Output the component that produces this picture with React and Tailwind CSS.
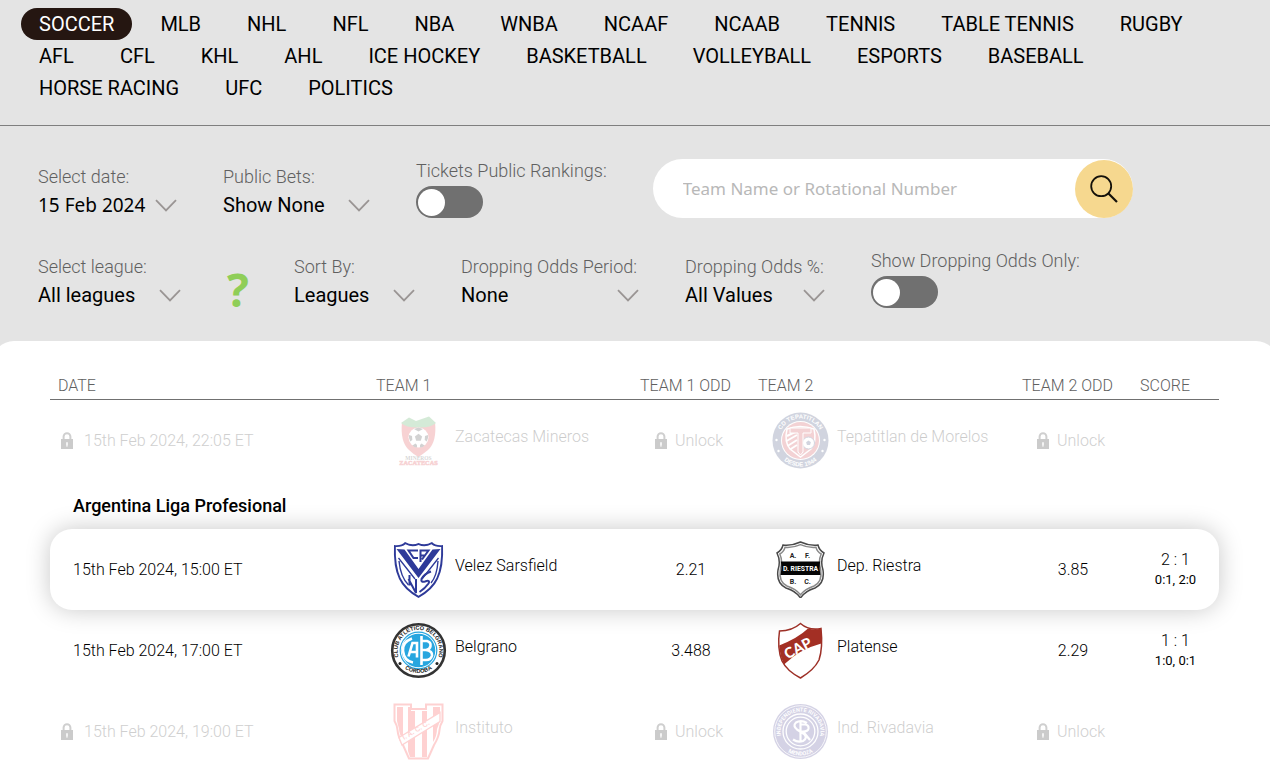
import React, { useState } from "react";

const SPORTS = [
  "SOCCER", "MLB", "NHL", "NFL", "NBA", "WNBA", "NCAAF", "NCAAB", "TENNIS", "TABLE TENNIS", "RUGBY",
  "AFL", "CFL", "KHL", "AHL", "ICE HOCKEY", "BASKETBALL", "VOLLEYBALL", "ESPORTS", "BASEBALL",
  "HORSE RACING", "UFC", "POLITICS",
];

function SportsNav() {
  const [active, setActive] = useState("SOCCER");
  return (
    <nav className="flex flex-wrap gap-x-[10px] border-b border-[#7f7f7f] pt-2 pr-4 pb-[21px] pl-[21px]">
      {SPORTS.map((s) => (
        <a
          key={s}
          href={"#" + s.toLowerCase().replace(" ", "-")}
          onClick={() => setActive(s)}
          className={
            "flex h-8 items-center rounded-full px-[18px] text-[20px] " +
            (s === active ? "bg-[#251611] text-white" : "text-black")
          }
        >
          {s}
        </a>
      ))}
    </nav>
  );
}

function SelectField({ id, label, width, options, valueFont = "text-[20px]" }) {
  return (
    <div className={"grid shrink-0 content-start pt-1.5 " + width}>
      <label htmlFor={id} className="text-[18px] leading-6 font-light whitespace-nowrap text-[#606060]">
        {label}
      </label>
      <div className="grid items-center">
        <select
          id={id}
          className={
            "col-start-1 row-start-1 h-8 w-full appearance-none bg-transparent p-0 text-black outline-none " +
            valueFont
          }
        >
          {options.map((o) => (
            <option key={o}>{o}</option>
          ))}
        </select>
        <svg
          viewBox="0 0 22 13"
          className="pointer-events-none col-start-1 row-start-1 h-[13px] w-[22px] justify-self-end"
          fill="none"
          stroke="#9a9594"
          strokeWidth="1.8"
          aria-hidden="true"
        >
          <path d="M1 1.2 L11 11.4 L21 1.2" />
        </svg>
      </div>
    </div>
  );
}

function ToggleField({ id, label }) {
  return (
    <div className="flex shrink-0 flex-col items-start gap-[3px]">
      <label htmlFor={id} className="text-[18px] leading-6 font-light whitespace-nowrap text-[#606060]">
        {label}
      </label>
      <input
        id={id}
        type="checkbox"
        className="flex h-8 w-[67px] appearance-none items-center rounded-full bg-[#707070] px-0.5 before:block before:size-[27px] before:rounded-full before:bg-white checked:justify-end"
      />
    </div>
  );
}

function SearchBox() {
  return (
    <form className="flex h-[59px] w-[480px] min-w-0 items-center rounded-full bg-white" onSubmit={(e) => e.preventDefault()}>
      <input
        type="search"
        aria-label="Team Name or Rotational Number"
        placeholder="Team Name or Rotational Number"
        className="min-w-0 flex-1 bg-transparent pl-[30px] font-['Noto_Sans',sans-serif] text-[17px] outline-none placeholder:text-[#b8b8b8]"
      />
      <button
        type="submit"
        aria-label="Search"
        className="flex size-[58px] shrink-0 items-center justify-center rounded-full bg-[#f6d88f]"
      >
        <svg viewBox="0 0 28 28" className="size-7" fill="none" stroke="#14110a" aria-hidden="true">
          <circle cx="11.2" cy="11.2" r="10" strokeWidth="1.8" />
          <path d="M18 18 L27 27" strokeWidth="2.2" />
        </svg>
      </button>
    </form>
  );
}

function Filters() {
  return (
    <div className="flex flex-col gap-7 pt-[33px] pr-4 pb-[30px] pl-[38px]">
      <div className="flex gap-x-[46px]">
        <SelectField
          id="date"
          label="Select date:"
          width="w-[139px]"
          options={["15 Feb 2024", "16 Feb 2024"]}
          valueFont="font-['Noto_Sans',sans-serif] text-[19px]"
        />
        <SelectField id="bets" label="Public Bets:" width="w-[147px]" options={["Show None", "Show All"]} />
        <ToggleField id="tickets" label="Tickets Public Rankings:" />
        <SearchBox />
      </div>
      <div className="flex gap-x-[46px]">
        <SelectField id="league" label="Select league:" width="w-[143px]" options={["All leagues", "Argentina Liga Profesional"]} />
        <button
          type="button"
          aria-label="Help"
          className="w-[21px] self-end pb-1 font-['Open_Sans',sans-serif] text-[46px] leading-9 font-bold text-[#8fce58]"
        >
          ?
        </button>
        <SelectField id="sort" label="Sort By:" width="w-[121px]" options={["Leagues", "Date"]} />
        <SelectField id="period" label="Dropping Odds Period:" width="w-[178px]" options={["None", "1 hour"]} />
        <SelectField id="percent" label="Dropping Odds %:" width="w-[140px]" options={["All Values", "10%"]} />
        <ToggleField id="dropping" label="Show Dropping Odds Only:" />
      </div>
    </div>
  );
}

function Lock() {
  return (
    <svg viewBox="0 0 12 17" className="h-[17px] w-3 shrink-0" aria-hidden="true">
      <path d="M2.6 8 V4.6 a3.4 3.4 0 0 1 6.8 0 V8" fill="none" stroke="#cfcfcf" strokeWidth="2" />
      <rect x="0" y="7" width="12" height="10" fill="#cbcbcb" />
      <path d="M5 10.2 h2 v2 l-0.4 2.6 h-1.2 l-0.4 -2.6z" fill="#f3f3f3" />
    </svg>
  );
}

function Mineros() {
  return (
    <>
      <path d="M12 10 Q28 17 45 10 Q47 30 38 38 Q33 42 28.500 45 Q23 42 19 38 Q10 30 12 10z" fill="#d8232a" />
      <path d="M11 11 L19 5.500 L26 9 L39 4.500 L46 11 Q40 16 28.500 15.500 Q17 16 11 11z" fill="#2f9a3b" />
      <circle cx="28.500" cy="25.500" r="10" fill="#fff" />
      <g fill="#222">
        <path d="M28.500 21.800l3.600 2.700-1.300 4.200h-4.600l-1.300-4.200z" />
        <path d="M24 17l4.500-1.500L33 17l-4.500 2.500z" />
        <path d="M19 23l3 1 .3 4-2 1.600q-2-3-1.300-6.600z" />
        <path d="M38 23l-3 1-.3 4 2 1.600q2-3 1.300-6.600z" />
        <path d="M22.500 33.500l3-2 1.500 1.500v2.400q-3 0-4.500-1.900z" />
        <path d="M34.500 33.500l-3-2-1.500 1.500v2.400q3 0 4.500-1.900z" />
      </g>
      <text x="28.500" y="47.500" textAnchor="middle" fontFamily="Liberation Serif" fontWeight="700" fontSize="5.500" fill="#333">MINEROS</text>
      <text x="28.500" y="53" textAnchor="middle" fontFamily="Liberation Serif" fontWeight="700" fontSize="6.300" fill="#d8232a" stroke="#d8232a" strokeWidth=".6">ZACATECAS</text>
    </>
  );
}

function Tepatitlan() {
  return (
    <>
      <circle cx="28.500" cy="28.500" r="28" fill="#1d2f63" />
      <circle cx="28.500" cy="28.500" r="19.500" fill="#fff" />
      <circle cx="28.500" cy="28.500" r="18.500" fill="#c5252f" />
      <path d="M15 17 Q28 12 42 17 Q45 30 39 37 L28.500 45 L18 37 Q12 30 15 17z" fill="#c5252f" stroke="#fff" strokeWidth="1.500" />
      <path d="M15 24 L25 19 M14.500 29 L25 23 M15.500 34 L25 28 M18 37.500 L25 33" stroke="#fff" strokeWidth="2" />
      <circle cx="36.500" cy="31" r="6" fill="#fff" stroke="#1d2f63" />
      <path d="M36.500 28.500l2.400 1.800-.9 2.800h-3l-.9-2.800z" fill="#1d2f63" />
      <path d="M18 16 H39 V21 H31 V40 L28.500 43 L26 40 V21 H18z" fill="#c5252f" stroke="#fff" strokeWidth="1" />
      <path id="tep-top" d="M6.500 28.500 A22 22 0 0 1 50.500 28.500" fill="none" />
      <path id="tep-bottom" d="M2.500 28.500 A26 26 0 0 0 54.500 28.500" fill="none" />
      <g fontFamily="Liberation Sans" fontWeight="700" fontSize="6" fill="#fff" textAnchor="middle">
        <text><textPath href="#tep-top" startOffset="50%">CD TEPATITLAN</textPath></text>
        <text><textPath href="#tep-bottom" startOffset="50%">DESDE 1944</textPath></text>
      </g>
      <g fill="#fff">
        <circle cx="4.500" cy="28" r="1.200" /><circle cx="52.500" cy="28" r="1.200" />
        <circle cx="6.500" cy="39" r="1.200" /><circle cx="50.500" cy="39" r="1.200" />
      </g>
    </>
  );
}

function Velez() {
  return (
    <>
      <path d="M4 4 Q11 5 15 1 Q22 5 28.500 2 Q35 5 42 1 Q46 5 53 4 Q54 26 48 38 Q43 49 28.500 57 Q14 49 9 38 Q3 26 4 4z" fill="#2e3a99" />
      <path d="M5.800 6 Q12 6.300 15.500 3.300 Q22 7 28.500 4.100 Q35 7 41.500 3.300 Q45 6.300 51.200 6 Q51.700 25 46.400 37 Q41 47.700 28.500 54.700 Q16 47.700 10.600 37 Q5.300 25 5.800 6z" fill="#fff" />
      <path d="M6.500 8 L14.500 8.500 L28.500 28 L42.500 8.500 L50.500 8 L28.500 37z" fill="#2e3a99" />
      <g fill="none" stroke="#2e3a99" strokeWidth="2">
        <path d="M28 9.500 H18.500 L23.500 17 H28" />
        <path d="M30.500 21 V9.500 H38.500 L32 18.500 M30.500 14.500 H35" />
        <path d="M19.500 34 V44.500 M18.500 38 L26 52 V38" />
        <path d="M41 30.500 Q34 33 31.500 38 Q30.500 41.500 35 40.500 Q40.500 38.500 38.500 42.500 Q35 47.500 29.500 51" />
      </g>
      <path d="M8.500 17 L25 38 M48.500 17 L32 38" fill="none" stroke="#2e3a99" strokeWidth="1.300" />
      <path d="M9 20 Q10.500 36 18.500 44 M48 20 Q47 35 41 42" fill="none" stroke="#2e3a99" strokeWidth="1.400" />
    </>
  );
}

function Belgrano() {
  return (
    <>
      <circle cx="28.500" cy="28.500" r="26.300" fill="#fff" stroke="#333" strokeWidth="2.600" />
      <circle cx="28.500" cy="28.500" r="18.300" fill="#fff" stroke="#28a6df" strokeWidth="1.200" />
      <circle cx="28.500" cy="28.500" r="16.800" fill="#28a6df" />
      <g fill="none" stroke="#fff" strokeWidth="2.600">
        <path d="M22 16.500 Q12 20 13 29 Q14 39 23 40.500" />
        <path d="M18.500 34.500 L22.500 21 H27 V35.500 M20 30 H27" />
        <path d="M31.500 14 V43 M31.500 19 H37 Q41 20 40.500 24 Q40 27.500 36 28 H31.500 M36 28 Q42.500 29 42 33.500 Q41 38 36 38 H31.500" />
      </g>
      <path id="bel-top" d="M9.500 37 A20.800 20.800 0 1 1 47.500 37" fill="none" />
      <path id="bel-bottom" d="M5 34 A24.800 24.800 0 0 0 52 34" fill="none" />
      <g fontFamily="Liberation Sans" fontWeight="700" fontSize="5.600" fill="#222" textAnchor="middle">
        <text><textPath href="#bel-top" startOffset="50%">CLUB ATLETICO BELGRANO</textPath></text>
        <text><textPath href="#bel-bottom" startOffset="50%">CORDOBA</textPath></text>
      </g>
      <circle cx="10" cy="41.500" r="1.500" fill="#222" />
      <circle cx="47" cy="41.500" r="1.500" fill="#222" />
    </>
  );
}

function Instituto() {
  return (
    <>
      <path d="M4.500 1.500 H21 V6 H36 V1.500 H52.500 V18 Q50 22 49.500 27 Q49 34 44 42 L38 55.500 H19 L13 42 Q8 34 7.500 27 Q7 22 4.500 18z" fill="#fff" stroke="#fb1f1f" strokeWidth="2" />
      <path d="M7 4 H13 V38 Q9 30 9 26 L7 18z M18 4 H21 V8 H25 V54 H20 L18 48z M32 8 H37 V54 H32z M43 4 H50 V18 L47 26 Q47 33 43 39z" fill="#fb1f1f" />
      <path d="M9 34.500 L50 9.500 V18.500 L12 42z" fill="#fff" stroke="#fb1f1f" strokeWidth="1.300" />
      <text transform="translate(14 37) rotate(-31)" fontFamily="Liberation Sans" fontWeight="700" fontSize="7" fill="#fb1f1f">I. A. C. C.</text>
    </>
  );
}

function Riestra() {
  return (
    <>
      <path d="M11 4 Q20 5 28.500 1 Q37 5 46 4 Q47 9 52 12 Q48 20 51 29 Q53 42 43 47 Q33 50 28.500 57 Q24 50 14 47 Q4 42 6 29 Q9 20 5 12 Q10 9 11 4z" fill="#fff" stroke="#4a4a4a" strokeWidth="1.500" />
      <path d="M13 6.300 Q21 7 28.500 3.600 Q36 7 44 6.300 Q45 10.500 49.200 13 Q46 20 48.700 29 Q50.500 41 42 45 Q33 48 28.500 53.800 Q24 48 15 45 Q6.500 41 8.300 29 Q11 20 7.800 13 Q12 10.500 13 6.300z" fill="#fff" stroke="#8a8a8a" strokeWidth="1.500" />
      <path d="M8.800 20.500 H48.200 Q47 26 48.500 34 H8.500 Q10 26 8.800 20.500z" fill="#050505" />
      <g fontFamily="Roboto" fontWeight="700" textAnchor="middle">
        <text x="28.500" y="30" fontSize="6.800" fill="#fff">D. RIESTRA</text>
        <g fontSize="7" fill="#222">
          <text x="21" y="16.500">A.</text><text x="35.500" y="16.500">F.</text>
          <text x="21" y="43">B.</text><text x="35.500" y="43">C.</text>
        </g>
      </g>
    </>
  );
}

function Platense() {
  return (
    <>
      <path d="M7.500 9 Q20 9 28.500 1.500 Q37 9 49 6.500 Q51 26 47 38 Q42 48 28.500 56 Q15 49 10 39 Q5 26 7.500 9z" fill="#fff" stroke="#9d3027" strokeWidth="1.500" />
      <path d="M7.200 23.500 Q26 16 36 6.500 Q43 8.500 49 6.500 Q50 14 49.300 21.500 Q28 27 12 42.500 Q8 34 7.200 23.500z" fill="#a32f24" />
      <text transform="translate(15.500 37.500) rotate(-28)" fontFamily="Lato" fontWeight="900" fontSize="14.500" fill="#fff">CAP</text>
    </>
  );
}

function Rivadavia() {
  return (
    <>
      <circle cx="28.500" cy="28.500" r="27.500" fill="#2d2480" />
      <circle cx="28.500" cy="28.500" r="25.800" fill="none" stroke="#fff" strokeWidth=".8" />
      <circle cx="28.500" cy="28.500" r="17.500" fill="none" stroke="#fff" strokeWidth="1.300" />
      <circle cx="28.500" cy="28.500" r="14.300" fill="none" stroke="#fff" strokeWidth="1.300" />
      <path d="M35 20 Q29 16.500 24 19.500 Q20.500 23 25 26.500 L32 31 Q36 35 31 38 Q26 40 21 36.500 M28.500 19 V38 M28.500 21.500 H33 Q37 22 36.500 25.500 Q36 28.500 31 28.500 L38 37" fill="none" stroke="#fff" strokeWidth="2.200" />
      <path id="riv-top" d="M9 33 A20 20 0 1 1 48 33" fill="none" />
      <path id="riv-bottom" d="M4.500 32 A24.300 24.300 0 0 0 52.500 32" fill="none" />
      <g fontFamily="Roboto" fontWeight="700" fontSize="5.500" fill="#fff" textAnchor="middle">
        <text><textPath href="#riv-top" startOffset="50%">INDEPENDIENTE RIVADAVIA</textPath></text>
        <text><textPath href="#riv-bottom" startOffset="50%">MENDOZA</textPath></text>
      </g>
    </>
  );
}

function Team({ name, Crest, locked }) {
  return (
    <td>
      <div className={"flex items-center pl-[22px] " + (locked ? "opacity-20" : "")}>
        <svg viewBox="0 0 57 57" className="size-[57px] shrink-0" aria-hidden="true">
          <Crest />
        </svg>
        <span className="pb-2 pl-2 whitespace-nowrap">{name}</span>
      </div>
    </td>
  );
}

function Odd({ value }) {
  return (
    <td className="flex justify-center">
      {value || (
        <button type="button" className="flex items-center gap-2 pr-1 text-[#cfcfcf]">
          <Lock />
          Unlock
        </button>
      )}
    </td>
  );
}

const ROW = "grid grid-cols-[318fr_264fr_118fr_264fr_118fr_87fr] items-center ";

function Match({ m, highlighted }) {
  const locked = !m.odd1;
  return (
    <tr className={ROW + "h-[81px] " + (highlighted ? "rounded-[22px] shadow-[0_0_24px_rgba(0,0,0,0.22)]" : "")}>
      <td className="whitespace-nowrap">
        {locked ? (
          <div className="flex items-center gap-[11px] pl-[11px] text-[#cfcfcf]">
            <Lock />
            {m.date}
          </div>
        ) : (
          <div className="pl-[23px]">{m.date}</div>
        )}
      </td>
      <Team name={m.team1} Crest={m.crest1} locked={locked} />
      <Odd value={m.odd1} />
      <Team name={m.team2} Crest={m.crest2} locked={locked} />
      <Odd value={m.odd2} />
      <td className="text-center">
        {m.score && (
          <>
            <div className="leading-5">{m.score}</div>
            <div className="text-[13px] leading-5 font-normal">{m.halves}</div>
          </>
        )}
      </td>
    </tr>
  );
}

const EARLIER = [
  { date: "15th Feb 2024, 22:05 ET", team1: "Zacatecas Mineros", crest1: Mineros, team2: "Tepatitlan de Morelos", crest2: Tepatitlan },
];

const ARGENTINA = [
  { date: "15th Feb 2024, 15:00 ET", team1: "Velez Sarsfield", crest1: Velez, odd1: "2.21", team2: "Dep. Riestra", crest2: Riestra, odd2: "3.85", score: "2 : 1", halves: "0:1, 2:0" },
  { date: "15th Feb 2024, 17:00 ET", team1: "Belgrano", crest1: Belgrano, odd1: "3.488", team2: "Platense", crest2: Platense, odd2: "2.29", score: "1 : 1", halves: "1:0, 0:1" },
  { date: "15th Feb 2024, 19:00 ET", team1: "Instituto", crest1: Instituto, team2: "Ind. Rivadavia", crest2: Rivadavia },
];

const COLUMNS = ["DATE", "TEAM 1", "TEAM 1 ODD", "TEAM 2", "TEAM 2 ODD", "SCORE"];

function Matches() {
  return (
    <table className="block text-[16px] font-light text-black">
      <thead className="block">
        <tr className={ROW + "h-7 border-b border-[#707070]"}>
          {COLUMNS.map((name) => (
            <th key={name} scope="col" className="pl-2 text-left font-light whitespace-nowrap text-[#606060]">
              {name}
            </th>
          ))}
        </tr>
      </thead>
      <tbody className="block">
        {EARLIER.map((m) => (
          <Match key={m.date} m={m} />
        ))}
        <tr className="flex h-12 items-center">
          <th colSpan={6} scope="colgroup" className="pl-[23px] text-left text-[18px] font-medium">
            Argentina Liga Profesional
          </th>
        </tr>
        {ARGENTINA.map((m, i) => (
          <Match key={m.date} m={m} highlighted={i === 0} />
        ))}
      </tbody>
    </table>
  );
}

export default function App() {
  return (
    <div className="min-h-screen overflow-hidden bg-[#e4e4e4] font-[Roboto,sans-serif]">
      <SportsNav />
      <Filters />
      <main className="-mx-2 rounded-t-[22px] bg-white pt-[31px] pr-[59px] pl-[58px]">
        <Matches />
      </main>
    </div>
  );
}
